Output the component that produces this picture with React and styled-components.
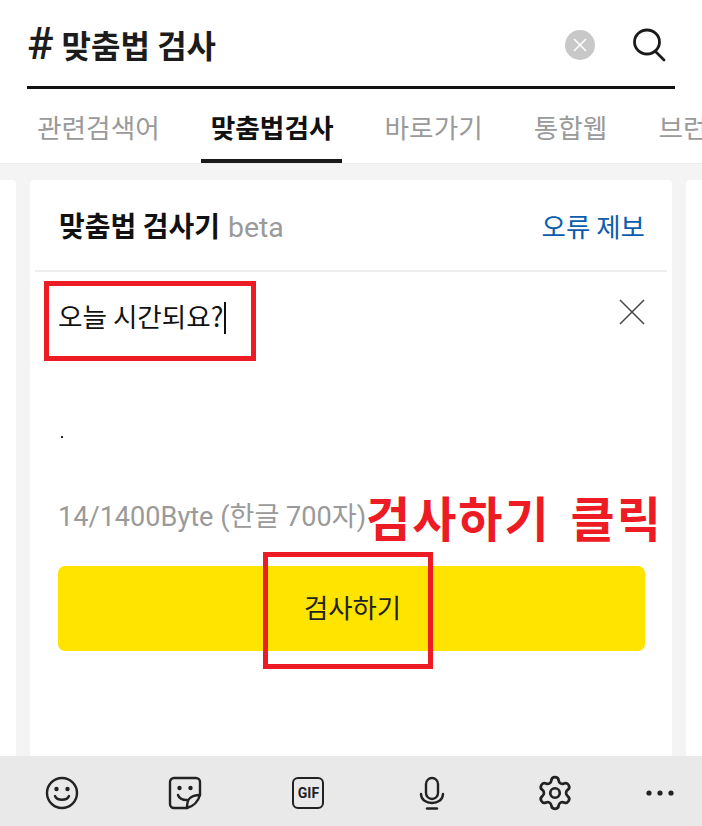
import React from "react";
import styled, { createGlobalStyle } from "styled-components";
import { Settings } from "lucide-react";

const Global = createGlobalStyle`
  html, body { margin: 0; padding: 0; width: 702px; height: 826px; overflow: hidden; background: #fff; }
  body { font-family: "Noto Sans CJK KR", Roboto, sans-serif; }
  * { box-sizing: border-box; }
`;
const KR = `"Noto Sans CJK KR", sans-serif`;
const LATIN = `Roboto, "Noto Sans CJK KR", sans-serif`;

const Page = styled.div`
  position: relative; width: 702px; height: 826px; display: flex; flex-direction: column; overflow: hidden; background: #f4f4f4;
`;
const Header = styled.header`
  height: 164px; flex: none; background: #fff; border-bottom: 1px solid #eeeeee; display: flex; flex-direction: column; padding: 0 0 0 27px; overflow: hidden;
`;
const SearchRow = styled.div`
  height: 89px; flex: none; width: 648px; border-bottom: 3px solid #111; display: flex; align-items: center; padding: 4px 0 0 0;
`;
const Title = styled.h1`
  flex: 1; margin: -2px 0 0; font: 700 32px/40px ${KR}; color: #1c1c1c; display: flex; align-items: center; gap: 8px;
`;
const Hash = styled.span`
  font: 500 44px/40px ${LATIN}; color: #1c1c1c;
`;
const ClearBadge = styled.span`
  width: 30px; height: 30px; border-radius: 50%; background: #c8c8c8; display: flex; align-items: center; justify-content: center; margin-right: 37px;
`;
const SearchBtn = styled.span`
  width: 34px; height: 34px; margin-right: 9px; display: flex; color: #1a1a1a;
`;
const Tabs = styled.nav`
  flex: 1; display: flex; gap: 31px; white-space: nowrap;
`;
const Tab = styled.div`
  flex: none; padding: 5px ${p => (p.$active ? 8 : 10)}px 0 10px; margin-right: ${p => (p.$active ? 2 : 0)}px; height: 74px; display: flex; align-items: center;
  font: ${p => (p.$active ? 700 : 400)} 26.7px/36px ${KR};
  color: ${p => (p.$active ? "#111" : "#9a9a9a")};
  border-bottom: 4px solid ${p => (p.$active ? "#1a1a1a" : "transparent")};
`;
const Stage = styled.main`
  flex: 1; min-height: 0; display: flex; gap: 14px; padding: 16px 0 0 0; overflow: hidden; margin-left: -626px; width: 1960px;
`;
const SideCard = styled.div`
  flex: none; width: 642px; background: #fff; border-radius: 4px 4px 0 0;
`;
const Card = styled.section`
  flex: none; width: 642px; background: #fff; border-radius: 4px 4px 0 0; padding: 0 5px; display: flex; flex-direction: column;
`;
const CardHead = styled.div`
  height: 92px; flex: none; border-bottom: 2px solid #eeeeee; display: flex; align-items: center; justify-content: space-between; padding: 2px 22px 0 24px;
`;
const CardTitle = styled.h2`
  margin: 0; font: 700 28px/36px ${KR}; color: #111; display: flex; align-items: baseline; gap: 8px;
`;
const Beta = styled.span`
  font: 400 28.5px/36px ${LATIN}; color: #9a9a9a;
`;
const Report = styled.a`
  font: 400 26.5px/36px ${KR}; color: #0b5cad;
`;
const Editor = styled.div`
  height: 216px; flex: none; padding: 24px 22px 0 23px; display: flex; align-items: flex-start; justify-content: space-between; position: relative;
`;
const Typed = styled.div`
  font: 400 26.6px/40px ${KR}; color: #111; display: flex; align-items: center;
`;
const Caret = styled.span`
  width: 1.5px; height: 32px; background: #111; margin: 3px 0 0 1px;
`;
const CloseIcon = styled.span`
  display: flex; width: 26px; height: 26px; margin-top: 3px; color: #444;
`;
const Dot = styled.span`
  position: absolute; left: 26px; top: 164px; width: 2px; height: 2px; background: #222;
`;
const CountRow = styled.div`
  height: 78px; flex: none; padding: 0 23px; display: flex; align-items: flex-start;
`;
const Count = styled.span`
  font: 400 27.1px/40px ${LATIN}; color: #9a9a9a; margin-top: 9px; white-space: nowrap;
`;
const Callout = styled.span`
  position: absolute; left: 366px; top: 486px; font: 700 48px/60px ${KR}; color: #ed1c24; white-space: nowrap; letter-spacing: 2px; word-spacing: 7px;
`;
const CheckButton = styled.button`
  height: 85px; flex: none; margin: 0 22px 0 23px; border: 0; border-radius: 7px; background: #ffe400; color: #222;
  font: 400 26.4px/36px ${KR}; display: flex; align-items: center; justify-content: center; padding: 0 0 4px 2px;
`;
const Mark = styled.div`
  position: absolute; border: 5px solid #ed1c24; pointer-events: none;
  left: ${p => p.$x}px; top: ${p => p.$y}px; width: ${p => p.$w}px; height: ${p => p.$h}px;
`;
const Toolbar = styled.footer`
  height: 70px; flex: none; background: #e9e9e9; display: grid; grid-template-columns: repeat(5, 123.4px) 86px; align-items: center; padding-top: 4px; position: relative;
`;
const ToolIcon = styled.span`
  display: flex; align-items: center; justify-content: center; color: #222;
`;
const GifLabel = styled.span`
  font: 700 14px/1 ${LATIN}; color: #222;
`;
const GifBox = styled.span`
  width: 32px; height: 32px; border: 2.5px solid #222; border-radius: 6px; display: flex; align-items: center; justify-content: center;
`;

const Svg = ({ children, w = 34, h = 34, vb = "0 0 34 34", sw = 2.4 }) => (
  <svg width={w} height={h} viewBox={vb} fill="none" stroke="currentColor" strokeWidth={sw} strokeLinecap="round" strokeLinejoin="round">{children}</svg>
);

export default function App() {
  return (
    <Page>
      <Global />
      <Header>
        <SearchRow>
          <Title><Hash>#</Hash>맞춤법 검사</Title>
          <ClearBadge>
            <svg width="16" height="16" viewBox="0 0 16 16" stroke="#fff" strokeWidth="1.6"><path d="M2 2 14 14M14 2 2 14" /></svg>
          </ClearBadge>
          <SearchBtn>
            <svg width="34" height="34" viewBox="0 0 34 34" fill="none" stroke="currentColor" strokeWidth="2.8" strokeLinecap="round"><ellipse cx="15" cy="14" rx="12.5" ry="12" /><path d="M23 23 32 32" /></svg>
          </SearchBtn>
        </SearchRow>
        <Tabs>
          <Tab>관련검색어</Tab>
          <Tab $active>맞춤법검사</Tab>
          <Tab>바로가기</Tab>
          <Tab>통합웹</Tab>
          <Tab>브런치</Tab>
        </Tabs>
      </Header>
      <Stage>
        <SideCard />
        <Card>
          <CardHead>
            <CardTitle>맞춤법 검사기<Beta>beta</Beta></CardTitle>
            <Report>오류 제보</Report>
          </CardHead>
          <Editor>
            <Typed>오늘 시간되요?<Caret /></Typed>
            <CloseIcon>
              <svg width="26" height="26" viewBox="0 0 26 26" stroke="currentColor" strokeWidth="1.5"><path d="M1 1 25 25M25 1 1 25" /></svg>
            </CloseIcon>
            <Dot />
          </Editor>
          <CountRow><Count>14/1400Byte (한글 700자)</Count></CountRow>
          <CheckButton>검사하기</CheckButton>
        </Card>
        <SideCard />
      </Stage>
      <Toolbar>
        <ToolIcon>
          <Svg><circle cx="17" cy="17" r="15" /><circle cx="11.5" cy="13" r="1" fill="currentColor" /><circle cx="22.5" cy="13" r="1" fill="currentColor" /><path d="M10 20c2 5 12 5 14 0" /></Svg>
        </ToolIcon>
        <ToolIcon>
          <Svg><path d="M19 32H6a4 4 0 0 1-4-4V6a4 4 0 0 1 4-4h22a4 4 0 0 1 4 4v13Z" /><path d="M19 32c0-3 0-7 2.500-9.500S28 19 32 19c-2 7-6 11-13 13Z" fill="#e9e9e9" /><circle cx="11.5" cy="12" r="1" fill="currentColor" /><circle cx="22.5" cy="12" r="1" fill="currentColor" /><path d="M10 19c1 3 4 5 9 5" /></Svg>
        </ToolIcon>
        <ToolIcon><GifBox><GifLabel>GIF</GifLabel></GifBox></ToolIcon>
        <ToolIcon>
          <Svg w={26} vb="0 0 26 34"><rect x="7" y="2" width="12" height="21" rx="6" /><path d="M2 18c0 12 22 12 22 0" /><path d="M8 32.5h10" /></Svg>
        </ToolIcon>
        <ToolIcon>
          <Settings size={38} strokeWidth={1.7} />
        </ToolIcon>
        <ToolIcon>
          <svg width="28" height="6" viewBox="0 0 28 6" fill="currentColor"><circle cx="3" cy="3" r="2.6" /><circle cx="14" cy="3" r="2.6" /><circle cx="25" cy="3" r="2.6" /></svg>
        </ToolIcon>
      </Toolbar>
      <Mark $x={44} $y={281} $w={212} $h={80} />
      <Mark $x={263} $y={552} $w={170} $h={117} />
      <Callout>검사하기 클릭</Callout>
    </Page>
  );
}
